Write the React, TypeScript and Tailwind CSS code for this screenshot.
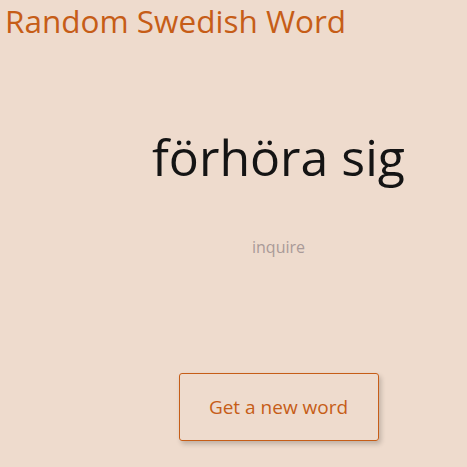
import React, { useState } from "react";

const words = [
  { sv: "förhöra sig", en: "inquire" },
  { sv: "hus", en: "house" },
  { sv: "vatten", en: "water" },
];

const App: React.FC = () => {
  const [index, setIndex] = useState(0);
  const word = words[index];

  return (
    <div className="min-h-screen bg-[#eedbcd] font-['Open_Sans',sans-serif]">
      <h1 className="pl-[5px] pt-[1px] text-[31.5px] leading-[40px] text-[#c65d17]">
        Random Swedish Word
      </h1>
      <div className="flex flex-col items-center pl-[90px]">
        <p className="mt-[78px] text-[50px] leading-[76px] text-[#141414]">{word.sv}</p>
        <p className="mt-[41px] text-[16px] leading-[22px] text-[#a99a98]">{word.en}</p>
        <button
          className="mt-[115px] h-[68px] w-[200px] rounded-[3px] border border-[#c65d17] text-[19px] text-[#c65d17] shadow-[2px_3px_5px_rgba(0,0,0,0.2)]"
          onClick={() => setIndex((index + 1) % words.length)}
        >
          Get a new word
        </button>
      </div>
    </div>
  );
};

export default App;
